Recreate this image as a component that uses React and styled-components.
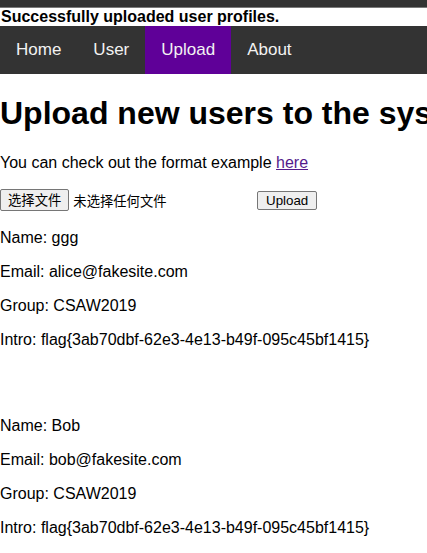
import React from 'react';
import styled, { createGlobalStyle } from 'styled-components';

const users = [
  {
    name: 'ggg',
    email: 'alice@fakesite.com',
    group: 'CSAW2019',
    intro: 'flag{3ab70dbf-62e3-4e13-b49f-095c45bf1415}',
  },
  {
    name: 'Bob',
    email: 'bob@fakesite.com',
    group: 'CSAW2019',
    intro: 'flag{3ab70dbf-62e3-4e13-b49f-095c45bf1415}',
  },
];

const navItems = ['Home', 'User', 'Upload', 'About'];

function App() {
  return (
    <>
      <GlobalStyle />
      <TopStrip />
      <Notice>Successfully uploaded user profiles.</Notice>
      <Nav>
        {navItems.map((item) => (
          <NavLink key={item} href='#' $active={item === 'Upload'}>
            {item}
          </NavLink>
        ))}
      </Nav>
      {/* nav End */}
      <Title>Upload new users to the system</Title>
      <Text>
        You can check out the format example <ExampleLink href='#'>here</ExampleLink>
      </Text>
      <UploadForm onSubmit={(e) => e.preventDefault()}>
        <FilePicker>
          <PickButton type='button'>选择文件</PickButton>
          <FileName>未选择任何文件</FileName>
        </FilePicker>
        <SubmitButton type='submit'>Upload</SubmitButton>
      </UploadForm>
      {/* form End */}
      {users.map((user, i) => (
        <div key={user.name}>
          {i > 0 && <Spacer />}
          <Text>Name: {user.name}</Text>
          <Text>Email: {user.email}</Text>
          <Text>Group: {user.group}</Text>
          <Text>Intro: {user.intro}</Text>
        </div>
      ))}
    </>
  );
}

export default App;

const GlobalStyle = createGlobalStyle`
  html, body {
    margin: 0;
    overflow: hidden;
    background: #fff;
    font-family: 'Liberation Sans', Arial, sans-serif;
    color: #000;
  }
`;

const TopStrip = styled.div`
  height: 7px;
  background: #333;
  border-bottom: 1px solid #7a7a7a;
`;

const Notice = styled.div`
  font-weight: bold;
  font-size: 16px;
  line-height: 18px;
  padding-left: 1px;
`;

const Nav = styled.div`
  display: flex;
  background: #333;
`;

const NavLink = styled.a`
  display: block;
  padding: 14px 16px;
  font-size: 17px;
  line-height: 20px;
  color: #f2f2f2;
  text-decoration: none;
  background: ${(p) => (p.$active ? '#5f0098' : 'transparent')};
`;

const Title = styled.h1`
  margin: 21.44px 0;
  font-size: 32px;
  line-height: 37px;
  white-space: nowrap;
`;

const Text = styled.p`
  margin: 16px 0;
  font-size: 16px;
  line-height: 18px;
  white-space: nowrap;
`;

const ExampleLink = styled.a`
  color: #551a8b;
`;

const UploadForm = styled.form`
  display: flex;
  align-items: center;
  gap: 4px;
  height: 25px;
  font-size: 13.33px;
`;

const FilePicker = styled.div`
  display: flex;
  align-items: center;
  width: 253px;
`;

const buttonLook = `
  background: #efefef;
  border: 1px solid #767676;
  border-radius: 2px;
  color: #000;
  font-size: 13.33px;
  margin: 0;
`;

const PickButton = styled.button`
  ${buttonLook}
  height: 22px;
  padding: 0 7px;
  font-family: 'Noto Sans CJK SC', sans-serif;
  line-height: 18px;
`;

const FileName = styled.span`
  margin-left: 4px;
  font-family: 'Noto Sans CJK SC', sans-serif;
  font-size: 13.33px;
`;

const SubmitButton = styled.button`
  ${buttonLook}
  height: 19px;
  padding: 0 8px;
  margin-top: 1px;
  font-family: 'Liberation Sans', Arial, sans-serif;
  line-height: 15px;
`;

const Spacer = styled.div`
  height: 36px;
`;
